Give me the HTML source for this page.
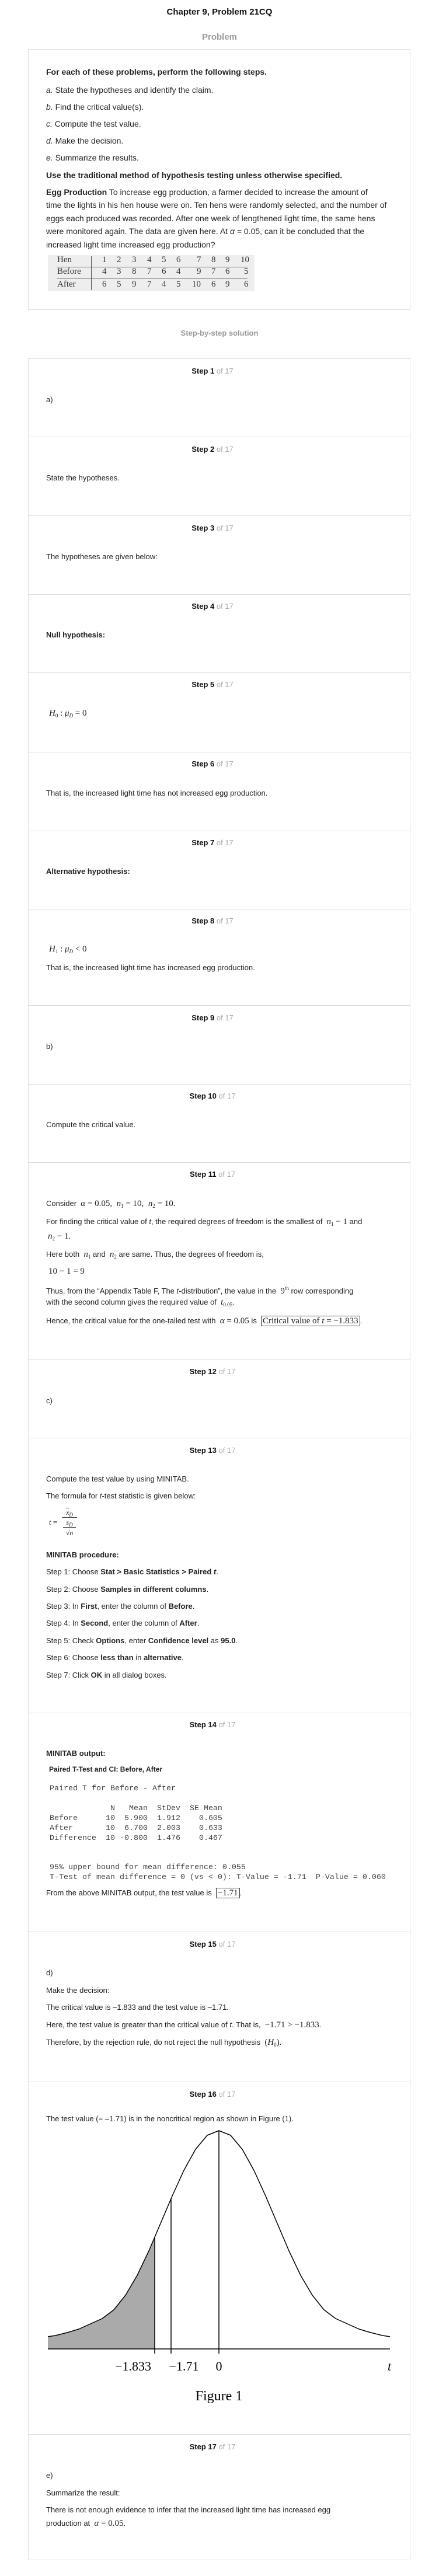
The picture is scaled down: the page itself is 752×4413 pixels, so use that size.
<!DOCTYPE html>
<html><head><meta charset="utf-8">
<style>
*{margin:0;padding:0;box-sizing:border-box}
body{width:752px;height:4413px;position:relative;background:#fff;font-family:"Liberation Sans",Arial,sans-serif;color:#222;overflow:hidden}
.a{position:absolute;white-space:nowrap}
.l{position:absolute;left:79px;font-size:13px;line-height:16px;white-space:nowrap}
.p{position:absolute;left:79px;font-size:14px;line-height:18px;white-space:nowrap}
.s{position:absolute;left:48px;width:632px;text-align:center;font-size:13px;line-height:16px;font-weight:bold;color:#111}
.s span{font-weight:normal;color:#aaa}
.hr{position:absolute;left:48px;width:655px;height:1px;background:#ddd}
.m{font-family:"Liberation Serif","Times New Roman",serif;font-size:15px}
.i{font-style:italic}
sub{font-size:9px;vertical-align:-3px}
.bx{border:1px solid #333;padding:0 2px}
.mono{position:absolute;left:85px;font-family:"Liberation Mono",monospace;font-size:13.33px;line-height:17px;color:#444;white-space:pre}
.tn{position:absolute;font-family:"Liberation Serif",serif;font-size:15px;color:#333;line-height:18px}
</style></head><body>

<div class="a" style="left:0;width:752px;text-align:center;top:12px;font-size:15px;font-weight:bold;color:#111">Chapter 9, Problem 21CQ</div>
<div class="a" style="left:0;width:752px;text-align:center;top:55px;font-size:15px;font-weight:bold;color:#999">Problem</div>

<div class="a" style="left:48px;top:84px;width:655px;height:447px;border:1px solid #ddd"></div>
<div class="p" style="top:114px;font-weight:bold">For each of these problems, perform the following steps.</div>
<div class="p" style="top:145px"><i>a.</i> State the hypotheses and identify the claim.</div>
<div class="p" style="top:174px"><i>b.</i> Find the critical value(s).</div>
<div class="p" style="top:203px"><i>c.</i> Compute the test value.</div>
<div class="p" style="top:232px"><i>d.</i> Make the decision.</div>
<div class="p" style="top:261px"><i>e.</i> Summarize the results.</div>
<div class="p" style="top:291px;font-weight:bold">Use the traditional method of hypothesis testing unless otherwise specified.</div>
<div class="p" style="top:320px"><b>Egg Production</b> To increase egg production, a farmer decided to increase the amount of</div>
<div class="p" style="top:342px">time the lights in his hen house were on. Ten hens were randomly selected, and the number of</div>
<div class="p" style="top:365px">eggs each produced was recorded. After one week of lengthened light time, the same hens</div>
<div class="p" style="top:387px">were monitored again. The data are given here. At <i>α</i> = 0.05, can it be concluded that the</div>
<div class="p" style="top:410px">increased light time increased egg production?</div>

<div class="a" style="left:82px;top:437px;width:354px;height:62px;background:#eeeeee"></div>
<div class="a" style="left:97px;top:457px;width:327px;height:1px;background:#555"></div>
<div class="a" style="left:97px;top:476px;width:327px;height:1px;background:#555"></div>
<div class="a" style="left:156px;top:439px;width:1px;height:58px;background:#555"></div>
<div class="tn" style="left:98px;top:436px">Hen</div>
<div class="tn" style="left:98px;top:456px">Before</div>
<div class="tn" style="left:98px;top:478px">After</div>
<div class="tn" style="left:175px;top:436px;word-spacing:0">1</div><div class="tn" style="left:200px;top:436px">2</div><div class="tn" style="left:226px;top:436px">3</div><div class="tn" style="left:252px;top:436px">4</div><div class="tn" style="left:277px;top:436px">5</div><div class="tn" style="left:302px;top:436px">6</div><div class="tn" style="left:337px;top:436px">7</div><div class="tn" style="left:362px;top:436px">8</div><div class="tn" style="left:386px;top:436px">9</div><div class="tn" style="left:412px;top:436px">10</div>
<div class="tn" style="left:175px;top:456px">4</div><div class="tn" style="left:200px;top:456px">3</div><div class="tn" style="left:226px;top:456px">8</div><div class="tn" style="left:252px;top:456px">7</div><div class="tn" style="left:277px;top:456px">6</div><div class="tn" style="left:302px;top:456px">4</div><div class="tn" style="left:337px;top:456px">9</div><div class="tn" style="left:362px;top:456px">7</div><div class="tn" style="left:386px;top:456px">6</div><div class="tn" style="left:418px;top:456px">5</div>
<div class="tn" style="left:175px;top:478px">6</div><div class="tn" style="left:200px;top:478px">5</div><div class="tn" style="left:226px;top:478px">9</div><div class="tn" style="left:252px;top:478px">7</div><div class="tn" style="left:277px;top:478px">4</div><div class="tn" style="left:302px;top:478px">5</div><div class="tn" style="left:329px;top:478px">10</div><div class="tn" style="left:362px;top:478px">6</div><div class="tn" style="left:386px;top:478px">9</div><div class="tn" style="left:418px;top:478px">6</div>

<div class="a" style="left:0;width:752px;text-align:center;top:563px;font-size:13px;font-weight:bold;color:#999">Step-by-step solution</div>

<div class="a" style="left:48px;top:614px;width:655px;height:3772px;border:1px solid #ddd"></div>
<div class="hr" style="top:748px"></div><div class="hr" style="top:883px"></div><div class="hr" style="top:1018px"></div><div class="hr" style="top:1152px"></div><div class="hr" style="top:1288px"></div><div class="hr" style="top:1423px"></div><div class="hr" style="top:1557px"></div><div class="hr" style="top:1722px"></div><div class="hr" style="top:1857px"></div><div class="hr" style="top:1991px"></div><div class="hr" style="top:2329px"></div><div class="hr" style="top:2463px"></div><div class="hr" style="top:2934px"></div><div class="hr" style="top:3309px"></div><div class="hr" style="top:3566px"></div><div class="hr" style="top:4170px"></div>

<div class="s" style="top:628px">Step 1 <span>of 17</span></div>
<div class="l" style="top:677px">a)</div>
<div class="s" style="top:762px">Step 2 <span>of 17</span></div>
<div class="l" style="top:811px">State the hypotheses.</div>
<div class="s" style="top:897px">Step 3 <span>of 17</span></div>
<div class="l" style="top:946px">The hypotheses are given below:</div>
<div class="s" style="top:1031px">Step 4 <span>of 17</span></div>
<div class="l" style="top:1080px;font-weight:bold">Null hypothesis:</div>
<div class="s" style="top:1165px">Step 5 <span>of 17</span></div>
<div class="l m" style="top:1214px;left:84px"><i>H</i><sub>0</sub> : <i>μ</i><sub><i>D</i></sub> = 0</div>
<div class="s" style="top:1301px">Step 6 <span>of 17</span></div>
<div class="l" style="top:1351px">That is, the increased light time has not increased egg production.</div>
<div class="s" style="top:1436px">Step 7 <span>of 17</span></div>
<div class="l" style="top:1485px;font-weight:bold">Alternative hypothesis:</div>
<div class="s" style="top:1570px">Step 8 <span>of 17</span></div>
<div class="l m" style="top:1618px;left:84px"><i>H</i><sub>1</sub> : <i>μ</i><sub><i>D</i></sub> &lt; 0</div>
<div class="l" style="top:1650px">That is, the increased light time has increased egg production.</div>
<div class="s" style="top:1736px">Step 9 <span>of 17</span></div>
<div class="l" style="top:1785px">b)</div>
<div class="s" style="top:1870px">Step 10 <span>of 17</span></div>
<div class="l" style="top:1919px">Compute the critical value.</div>
<div class="s" style="top:2004px">Step 11 <span>of 17</span></div>
<div class="l" style="top:2054px">Consider &nbsp;<span class="m"><i>α</i> = 0.05, &nbsp;<i>n</i><sub>1</sub> = 10, &nbsp;<i>n</i><sub>2</sub> = 10.</span></div>
<div class="l" style="top:2085px">For finding the critical value of <i>t</i>, the required degrees of freedom is the smallest of &nbsp;<span class="m"><i>n</i><sub>1</sub> − 1</span> and</div>
<div class="l m" style="top:2110px;left:82px"><i>n</i><sub>2</sub> − 1.</div>
<div class="l" style="top:2141px">Here both &nbsp;<span class="m"><i>n</i><sub>1</sub></span> and &nbsp;<span class="m"><i>n</i><sub>2</sub></span> are same. Thus, the degrees of freedom is,</div>
<div class="l m" style="top:2170px;left:83px">10 − 1 = 9</div>
<div class="l" style="top:2199px">Thus, from the “Appendix Table F, The <i>t</i>-distribution”, the value in the &nbsp;<span class="m">9<sup style="font-size:9px">th</sup></span> row corresponding</div>
<div class="l" style="top:2223px">with the second column gives the required value of &nbsp;<span class="m"><i>t</i><sub>0.05</sub></span>.</div>
<div class="l" style="top:2255px">Hence, the critical value for the one-tailed test with &nbsp;<span class="m"><i>α</i> = 0.05</span> is &nbsp;<span class="m bx">Critical value of <i>t</i> = −1.833</span>.</div>
<div class="s" style="top:2342px">Step 12 <span>of 17</span></div>
<div class="l" style="top:2392px">c)</div>
<div class="s" style="top:2477px">Step 13 <span>of 17</span></div>
<div class="l" style="top:2526px">Compute the test value by using MINITAB.</div>
<div class="l" style="top:2555px">The formula for <i>t</i>-test statistic is given below:</div>
<div class="a m" style="left:84px;top:2600px;font-size:13px"><i>t</i> =</div>
<div class="a m" style="left:106px;top:2584px;width:26px;text-align:center;font-size:12px;line-height:14px"><i style="text-decoration:overline">x</i><sub><i>D</i></sub></div>
<div class="a" style="left:106px;top:2599px;width:26px;height:1px;background:#333"></div>
<div class="a m" style="left:108px;top:2601px;width:22px;text-align:center;font-size:12px;line-height:14px"><i>s</i><sub><i>D</i></sub></div>
<div class="a" style="left:108px;top:2616px;width:22px;height:1px;background:#333"></div>
<div class="a m" style="left:108px;top:2618px;width:22px;text-align:center;font-size:12px;line-height:16px">√<i>n</i></div>
<div class="l" style="top:2656px;font-weight:bold">MINITAB procedure:</div>
<div class="l" style="top:2685px">Step 1: Choose <b>Stat &gt; Basic Statistics &gt; Paired <i>t</i></b>.</div>
<div class="l" style="top:2715px">Step 2: Choose <b>Samples in different columns</b>.</div>
<div class="l" style="top:2744px">Step 3: In <b>First</b>, enter the column of <b>Before</b>.</div>
<div class="l" style="top:2773px">Step 4: In <b>Second</b>, enter the column of <b>After</b>.</div>
<div class="l" style="top:2803px">Step 5: Check <b>Options</b>, enter <b>Confidence level</b> as <b>95.0</b>.</div>
<div class="l" style="top:2832px">Step 6: Choose <b>less than</b> in <b>alternative</b>.</div>
<div class="l" style="top:2862px">Step 7: Click <b>OK</b> in all dialog boxes.</div>
<div class="s" style="top:2947px">Step 14 <span>of 17</span></div>
<div class="l" style="top:2996px;font-weight:bold">MINITAB output:</div>
<div class="a" style="left:84px;top:3024px;font-size:12px;font-weight:bold;line-height:14px">Paired T-Test and CI: Before, After</div>
<div class="mono" style="top:3056px">Paired T for Before - After</div>
<div class="mono" style="top:3090px">             N   Mean  StDev  SE Mean
Before      10  5.900  1.912    0.605
After       10  6.700  2.003    0.633
Difference  10 -0.800  1.476    0.467</div>
<div class="mono" style="top:3191px">95% upper bound for mean difference: 0.055
T-Test of mean difference = 0 (vs &lt; 0): T-Value = -1.71  P-Value = 0.060</div>
<div class="l" style="top:3235px">From the above MINITAB output, the test value is &nbsp;<span class="m bx">−1.71</span>.</div>
<div class="s" style="top:3323px">Step 15 <span>of 17</span></div>
<div class="l" style="top:3372px">d)</div>
<div class="l" style="top:3402px">Make the decision:</div>
<div class="l" style="top:3431px">The critical value is –1.833 and the test value is –1.71.</div>
<div class="l" style="top:3461px">Here, the test value is greater than the critical value of <i>t</i>. That is, &nbsp;<span class="m">−1.71 &gt; −1.833</span>.</div>
<div class="l" style="top:3491px">Therefore, by the rejection rule, do not reject the null hypothesis &nbsp;<span class="m">(<i>H</i><sub>0</sub>)</span>.</div>
<div class="s" style="top:3580px">Step 16 <span>of 17</span></div>
<div class="l" style="top:3622px">The test value (= –1.71) is in the noncritical region as shown in Figure (1).</div>

<svg class="a" style="left:0;top:3640px" width="752" height="480" viewBox="0 0 752 480">
<path d="M82,363 L95,361 L115,356 L135,350 L155,341 L175,332 L195,317 L215,292 L235,258 L255,216 L265,193 L265,384 L82,384 Z" fill="#aaa"/>
<path d="M82,363 L95,361 L115,356 L135,350 L155,341 L175,332 L195,317 L215,292 L235,258 L255,216 L275,169 L295,122 L315,78 L335,42 L355,18 L375,10 L395,18 L415,42 L435,78 L455,122 L475,169 L495,216 L515,258 L535,292 L555,317 L575,332 L595,341 L615,350 L635,356 L655,361 L668,363" fill="none" stroke="#000" stroke-width="1.5" stroke-linejoin="round"/>
<line x1="82" y1="384" x2="668" y2="384" stroke="#000" stroke-width="1.5"/>
<line x1="265" y1="193" x2="265" y2="392" stroke="#000" stroke-width="1.5"/>
<line x1="293" y1="126" x2="293" y2="392" stroke="#000" stroke-width="1.5"/>
<line x1="375" y1="10" x2="375" y2="392" stroke="#000" stroke-width="1.5"/>
<text x="228" y="421" text-anchor="middle" font-family="Liberation Serif,serif" font-size="22">−1.833</text>
<text x="315" y="421" text-anchor="middle" font-family="Liberation Serif,serif" font-size="22">−1.71</text>
<text x="375" y="421" text-anchor="middle" font-family="Liberation Serif,serif" font-size="22">0</text>
<text x="667" y="421" text-anchor="middle" font-family="Liberation Serif,serif" font-size="22" font-style="italic">t</text>
<text x="375" y="472" text-anchor="middle" font-family="Liberation Serif,serif" font-size="24">Figure 1</text>
</svg>

<div class="s" style="top:4184px">Step 17 <span>of 17</span></div>
<div class="l" style="top:4233px">e)</div>
<div class="l" style="top:4263px">Summarize the result:</div>
<div class="l" style="top:4292px">There is not enough evidence to infer that the increased light time has increased egg</div>
<div class="l" style="top:4315px">production at &nbsp;<span class="m"><i>α</i> = 0.05</span>.</div>
</body></html>
